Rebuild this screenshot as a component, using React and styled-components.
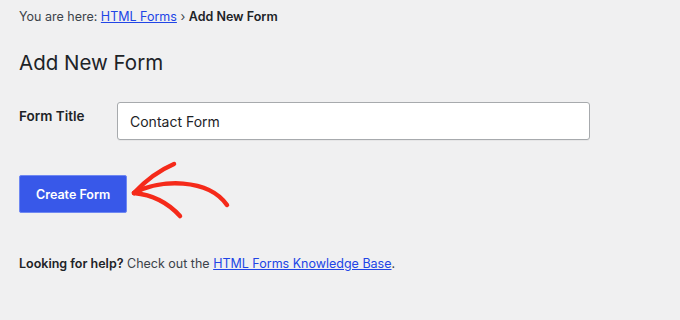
import React, { useState } from 'react'
import styled, { createGlobalStyle } from 'styled-components'

const GlobalStyle = createGlobalStyle`
  html, body {
    margin: 0;
    padding: 0;
    background: #f0f0f1;
    font-family: Inter, "Liberation Sans", sans-serif;
    color: #1d2327;
  }
`

const Page = styled.div`
  width: 680px;
  height: 320px;
  box-sizing: border-box;
  padding: 8px 19px 0;
  overflow: hidden;
`

const Breadcrumb = styled.div`
  font-size: 12.5px;
  line-height: 18px;
  color: #3c434a;
`

const Link = styled.a`
  color: #2145e6;
  text-decoration: underline;
`

const Current = styled.strong`
  font-weight: 600;
  color: #1d2327;
`

const Heading = styled.h1`
  margin: 23px 0 0;
  font-size: 20.5px;
  line-height: 28px;
  font-weight: 400;
  color: #1d2327;
`

const FieldRow = styled.div`
  display: flex;
  align-items: flex-start;
  margin-top: 25px;
`

const Label = styled.label`
  width: 98px;
  font-size: 13.5px;
  font-weight: 600;
  line-height: 20px;
  padding-top: 4px;
`

const Input = styled.input`
  width: 473px;
  height: 38px;
  box-sizing: border-box;
  padding: 0 12px;
  border: 1px solid #a7aaad;
  border-radius: 3px;
  background: #fff;
  box-shadow: 0 1px 0 rgba(0, 0, 0, 0.04);
  font-family: inherit;
  font-size: 14px;
  color: #1d2327;
  outline: none;
`

const ActionRow = styled.div`
  position: relative;
  margin-top: 35px;
  height: 38px;
`

const Button = styled.button`
  height: 38px;
  padding: 0 16px;
  border: 1px solid #6f88f2;
  border-radius: 2px;
  background: #3858e9;
  color: #fff;
  font-family: inherit;
  font-size: 12.5px;
  font-weight: 600;
  cursor: pointer;
`

const Arrow = styled.svg`
  position: absolute;
  left: 91px;
  top: -20px;
  overflow: visible;
`

const Help = styled.p`
  margin: 42px 0 0;
  font-size: 12.5px;
  line-height: 18px;
  color: #3c434a;
`

const App = () => {
  const [title, setTitle] = useState('Contact Form')

  return (
    <Page>
      <GlobalStyle />
      <Breadcrumb>
        You are here: <Link href="#">HTML Forms</Link> › <Current>Add New Form</Current>
      </Breadcrumb>
      <Heading>Add New Form</Heading>
      <FieldRow>
        <Label htmlFor="title">Form Title</Label>
        <Input id="title" value={title} onChange={(e) => setTitle(e.target.value)} />
      </FieldRow>
      <ActionRow>
        <Button>Create Form</Button>
        {/* hand drawn arrow pointing at the button */}
        <Arrow width="130" height="70" viewBox="110 155 130 70">
          <g fill="none" stroke="#f52a1a" strokeWidth="4.5" strokeLinecap="round" strokeLinejoin="round">
            <path d="M134,193 C160,179 208,178 227,205" />
            <path d="M134,193 C146,180 160,170 174,164" />
            <path d="M134,193 C155,195 170,205 180,216" />
          </g>
        </Arrow>
      </ActionRow>
      <Help>
        <Current>Looking for help?</Current> Check out the{' '}
        <Link href="#">HTML Forms Knowledge Base</Link>.
      </Help>
    </Page>
  )
}

export default App
